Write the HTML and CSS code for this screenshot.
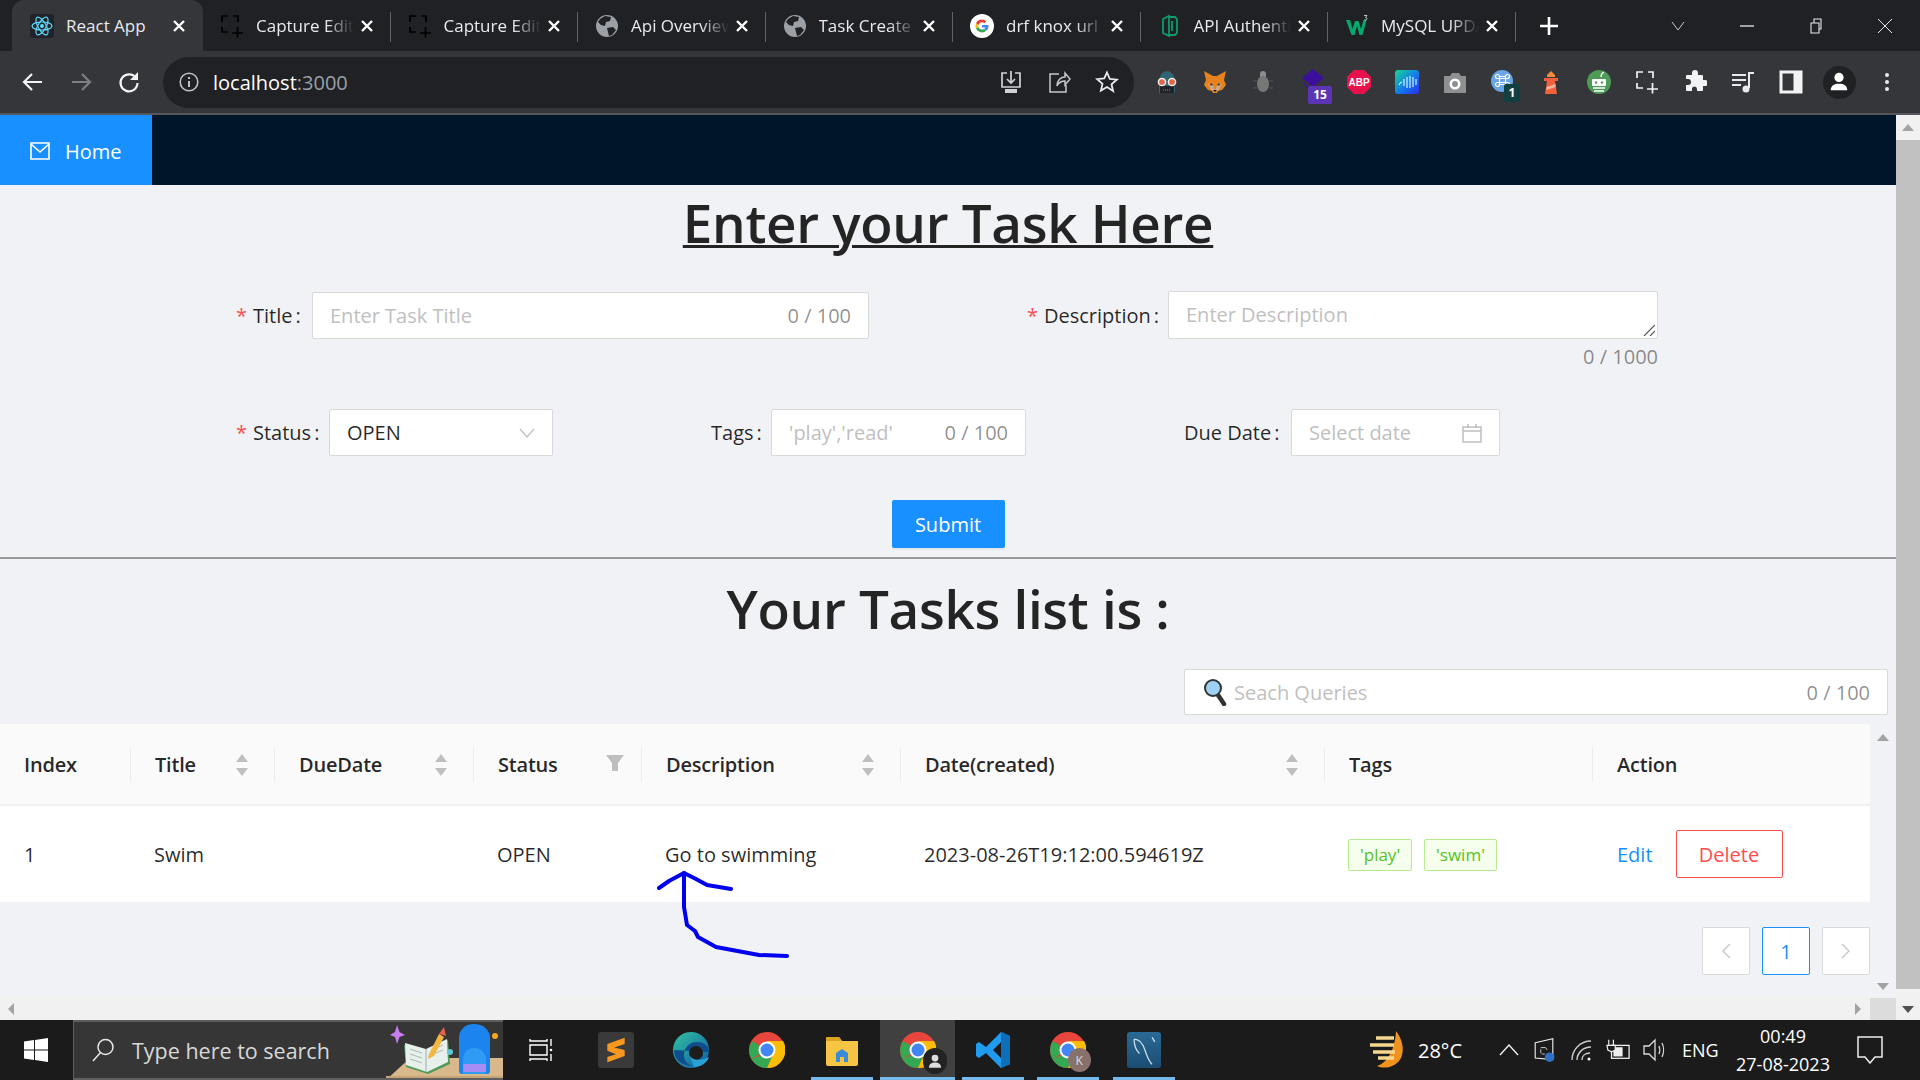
FILE: index.html
```html
<!DOCTYPE html>
<html lang="en">
<head>
<meta charset="utf-8">
<title>React App</title>
<link rel="stylesheet" href="styles.css">
</head>
<body>
<svg class="defs" width="0" height="0" aria-hidden="true">
  <defs>
    <symbol id="x" viewBox="0 0 14 14"><path d="M2 2l10 10M12 2L2 12" fill="none" stroke="currentColor" stroke-width="2.4"/></symbol>
    <symbol id="cap" viewBox="0 0 24 24"><path d="M2 8V2h6M13 2h5v6M2 13v5h6M12 19h11M17.500 13v10.500" fill="none" stroke="currentColor" stroke-width="1.700"/></symbol>
    <symbol id="globe" viewBox="0 0 24 24"><circle cx="12" cy="12" r="11" fill="#9aa0a6"/><path d="M5 5l5-3 6 1-1 4-4 1-1 4-4-1-3-3zM12 14l6-1 3 3-4 5-3 1-1-4z" fill="#202124"/></symbol>
    <symbol id="sort" viewBox="0 0 14 24"><path d="M7 1l6 8H1zM7 23l-6-8h12z" fill="#bfbfbf"/></symbol>
    <symbol id="chrome" viewBox="0 0 36 36"><circle cx="18" cy="18" r="18" fill="#e8453c"/><path d="M18 18L2.4 27A18 18 0 0 1 3 9z" fill="#34a853"/><path d="M2.4 27A18 18 0 0 0 18 36L26 18z" fill="#34a853"/><path d="M18 36A18 18 0 0 0 34 9H18l8 9z" fill="#fbbc05"/><circle cx="18" cy="18" r="8.5" fill="#fff"/><circle cx="18" cy="18" r="6.5" fill="#4285f4"/></symbol>
  </defs>
</svg>

<header class="tabstrip">
  <div class="tab active">
    <svg class="fav" viewBox="0 0 24 24"><rect width="24" height="24" rx="3" fill="#20232a"/><g fill="none" stroke="#61dafb" stroke-width="1.2"><ellipse cx="12" cy="12" rx="10" ry="4"/><ellipse cx="12" cy="12" rx="10" ry="4" transform="rotate(60 12 12)"/><ellipse cx="12" cy="12" rx="10" ry="4" transform="rotate(120 12 12)"/></g><circle cx="12" cy="12" r="2" fill="#61dafb"/></svg>
    <span class="tab-title">React App</span>
    <svg class="tab-x"><use href="#x"/></svg>
  </div>
  <div class="tab nosep"><svg class="fav fav-black"><use href="#cap"/></svg><span class="tab-title fade">Capture Editor</span><svg class="tab-x"><use href="#x"/></svg></div>
  <div class="tab"><svg class="fav fav-black"><use href="#cap"/></svg><span class="tab-title fade">Capture Editor</span><svg class="tab-x"><use href="#x"/></svg></div>
  <div class="tab"><svg class="fav"><use href="#globe"/></svg><span class="tab-title fade">Api Overview</span><svg class="tab-x"><use href="#x"/></svg></div>
  <div class="tab"><svg class="fav"><use href="#globe"/></svg><span class="tab-title fade">Task Create</span><svg class="tab-x"><use href="#x"/></svg></div>
  <div class="tab">
    <svg class="fav" viewBox="0 0 24 24"><circle cx="12" cy="12" r="12" fill="#fff"/><path d="M12 5.5a6.5 6.5 0 0 1 4.4 1.7l-2 2A3.800 3.800 0 0 0 8.400 11L6 9.200A6.500 6.500 0 0 1 12 5.500z" fill="#ea4335"/><path d="M6 9.200L8.400 11a3.800 3.800 0 0 0 0 2L6 14.800a6.500 6.500 0 0 1 0-5.600z" fill="#fbbc05"/><path d="M6 14.800L8.400 13a3.800 3.800 0 0 0 5.600 2l2.200 1.800A6.500 6.500 0 0 1 6 14.800z" fill="#34a853"/><path d="M18.400 11h-6.300v2.500h3.500a3 3 0 0 1-1.600 1.500l2.200 1.800a6.300 6.300 0 0 0 2.200-5.800z" fill="#4285f4"/></svg>
    <span class="tab-title fade">drf knox url</span><svg class="tab-x"><use href="#x"/></svg>
  </div>
  <div class="tab">
    <svg class="fav" viewBox="0 0 24 24"><path d="M5 5l6-3v20l-6-3zM11 3h6l2 2v14l-2 2h-6M14 7v10" fill="none" stroke="#0c9b6a" stroke-width="1.800"/></svg>
    <span class="tab-title fade">API Authentication</span><svg class="tab-x"><use href="#x"/></svg>
  </div>
  <div class="tab">
    <svg class="fav" viewBox="0 0 24 24"><path d="M1 6h4l2.500 9L10 7h3.500l2.500 8 2.500-9h3L17.500 21h-3L12 12l-2.500 9h-3z" fill="#04aa6d"/><path d="M19 1.500h3l-1.500 2c1 0 1.500.5 1.500 1.200 0 1-1 1.500-2.700 1.200" fill="none" stroke="#cfd3d6" stroke-width=".9"/></svg>
    <span class="tab-title fade">MySQL UPDATE</span><svg class="tab-x"><use href="#x"/></svg>
  </div>
  <svg class="newtab" viewBox="0 0 18 18"><path d="M9 0v18M0 9h18" stroke="#fff" stroke-width="2.600"/></svg>
  <div class="wincontrols">
    <svg class="wc" viewBox="0 0 16 16"><path d="M2 4l6 8 6-8" fill="none" stroke="#c8c9cb" stroke-width="1"/></svg>
    <svg class="wc" viewBox="0 0 16 16"><path d="M1 8h14" stroke="#e8eaed" stroke-width="1.300"/></svg>
    <svg class="wc" viewBox="0 0 16 16"><path d="M3 5h8v10H3zM6 5V1h7v10h-2" fill="none" stroke="#e8eaed" stroke-width="1.100"/></svg>
    <svg class="wc" viewBox="0 0 16 16"><path d="M1 1l14 14M15 1L1 15" stroke="#e8eaed" stroke-width="1"/></svg>
  </div>
</header>

<nav class="toolbar">
  <button class="navbtn"><svg viewBox="0 0 24 24"><path d="M21 12H4M11 4l-8 8 8 8" fill="none" stroke="#f1f3f4" stroke-width="2.200"/></svg></button>
  <button class="navbtn"><svg viewBox="0 0 24 24"><path d="M3 12h17M13 4l8 8-8 8" fill="none" stroke="#7d7f82" stroke-width="2.200"/></svg></button>
  <button class="navbtn"><svg viewBox="0 0 24 24"><path d="M19 8a8.500 8.500 0 1 0 1.500 5" fill="none" stroke="#f1f3f4" stroke-width="2.200"/><path d="M21 2v8h-8z" fill="#f1f3f4"/></svg></button>
  <div class="omnibox">
    <svg class="info" viewBox="0 0 20 20"><circle cx="10" cy="10" r="8.800" fill="none" stroke="#bdc1c6" stroke-width="1.600"/><path d="M10 9v6M10 5v2" stroke="#bdc1c6" stroke-width="2"/></svg>
    <span class="url">localhost<span class="port">:3000</span></span>
    <div class="omni-actions">
      <svg viewBox="0 0 24 24"><path d="M8 3H3v14h18V3h-5M12 1v11M8 9l4 4 4-4" fill="none" stroke="#d0d2d5" stroke-width="1.700"/><rect x="6" y="19" width="12" height="4" fill="#d0d2d5"/></svg>
      <svg viewBox="0 0 24 24"><path d="M12 4H3v18h16v-7M10 16c0-6 4-9 8-9V3l5 6-5 6v-4c-3 0-6 1-8 5z" fill="none" stroke="#c4c6c9" stroke-width="1.500"/></svg>
      <svg viewBox="0 0 24 24"><path d="M12 2.500l2.800 6.500 7 .6-5.300 4.600 1.600 6.900L12 17l-6.100 3.600 1.600-6.900L2.200 9.100l7-.6z" fill="none" stroke="#e8eaed" stroke-width="1.800"/></svg>
    </div>
  </div>
  <div class="extensions">
    <div class="ext"><svg viewBox="0 0 24 24"><path d="M4 11a8 10 0 0 1 16 0v12H4z" fill="#2f6473"/><rect x="5" y="16" width="14" height="7" fill="#20242a"/><path d="M8 20h8" stroke="#7a8c94" stroke-width="1.200" stroke-dasharray="1 1"/><circle cx="7" cy="12" r="3.600" fill="#e2674a" stroke="#f3ebe4" stroke-width="1.500"/><circle cx="17" cy="12" r="3.600" fill="#e2674a" stroke="#f3ebe4" stroke-width="1.500"/></svg></div>
    <div class="ext"><svg viewBox="0 0 24 24"><path d="M1 1l9 5h4l9-5-2 9 2 5-4 5-4 1-1 2h-4l-1-2-4-1-4-5 2-5z" fill="#e8821e"/><path d="M5 14l5 2 2 5 2-5 5-2-4 7H9z" fill="#c0ad9e"/><path d="M8 13l2 2-3 .5zM16 13l-2 2 3 .5z" fill="#233447"/><path d="M10 20h4l-2 2z" fill="#2f1d0f"/></svg></div>
    <div class="ext"><svg viewBox="0 0 24 24"><path d="M9 4a3 3 0 0 1 6 0v3H9z" fill="#8b8c8e"/><ellipse cx="12" cy="14" rx="6" ry="8" fill="#777"/><path d="M2 11h4M2 18h4M18 11h4M18 18h4" stroke="#55565a" stroke-width="1"/></svg></div>
    <div class="ext wizard"><svg viewBox="0 0 24 24"><path d="M12 2l11 9-11 9-11-9z" fill="#3c0e9c"/><path d="M1 14l7 6v3z" fill="#3c0e9c"/></svg><span class="badge badge-purple">15</span></div>
    <div class="ext"><svg viewBox="0 0 24 24"><path d="M7 0h10l7 7v10l-7 7H7l-7-7V7z" fill="#e8114b"/><text class="abp" x="12" y="15.500" text-anchor="middle">ABP</text></svg></div>
    <div class="ext">
      <svg viewBox="0 0 24 24"><defs><linearGradient id="lg" x1="0" y1="0" x2="1" y2="1"><stop offset="0" stop-color="#17d68f"/><stop offset=".55" stop-color="#1479f0"/><stop offset="1" stop-color="#2b2ee8"/></linearGradient></defs><rect width="24" height="24" rx="3" fill="url(#lg)"/><path d="M4 15c1-2 2-3 3-3M9 9v7M12 7v11M15 6v12M18 7v10M21 9v6" fill="none" stroke="#dff" stroke-width="1.100"/></svg>
    </div>
    <div class="ext"><svg viewBox="0 0 24 24"><path d="M1 6h6l2-3h7l2 3h5v17H1z" fill="#8f9092"/><circle cx="12" cy="14" r="5.500" fill="#fff"/><circle cx="12" cy="14" r="3" fill="#8f9092"/></svg></div>
    <div class="ext"><svg viewBox="0 0 24 24"><circle cx="11" cy="11" r="11" fill="#6aa5e8"/><path d="M8.500 6.500h6v8h-6zM8.500 6.500a2 2 0 1 0-2 2h10a2 2 0 1 0-2-2M8.500 14.500a2 2 0 1 1-2-2h10a2 2 0 1 1-2 2" fill="none" stroke="#fff" stroke-width="1.200"/></svg><span class="badge badge-teal">1</span></div>
    <div class="ext"><svg viewBox="0 0 24 24"><path d="M12 1l4 4v2h-8V5z" fill="#f28b3c"/><path d="M5 8h14v3h-3l2 13H6l2-13H5z" fill="#f2603c"/><path d="M7.500 17l9-3v3l-9 3z" fill="#f9b59b"/></svg></div>
    <div class="ext"><svg viewBox="0 0 24 24"><circle cx="12" cy="12" r="12" fill="#4e9a57"/><rect x="5" y="9" width="14" height="7" rx="1" fill="#fff"/><circle cx="9" cy="12.500" r="1.200" fill="#4e9a57"/><circle cx="15" cy="12.500" r="1.200" fill="#4e9a57"/><path d="M14 7c0-3 1-4 3-5M6 18h12M7 21h10" fill="none" stroke="#fff" stroke-width="1.300"/></svg></div>
    <div class="ext ext-white"><svg><use href="#cap"/></svg></div>
    <div class="ext"><svg viewBox="0 0 24 24"><path d="M9 3a3 3 0 0 1 6 0v2h4a1 1 0 0 1 1 1v4h2a3 3 0 0 1 0 6h-2v4a1 1 0 0 1-1 1h-5v-2a2.500 2.500 0 0 0-5 0v2H4a1 1 0 0 1-1-1v-5h2a3 3 0 0 0 0-6H3V6a1 1 0 0 1 1-1h5z" fill="#f1f3f4"/></svg></div>
    <div class="ext"><svg viewBox="0 0 24 24"><path d="M1 5h14M1 10h14M1 15h9" stroke="#e8eaed" stroke-width="2"/><path d="M18 18V3h5" fill="none" stroke="#e8eaed" stroke-width="2"/><circle cx="15" cy="19" r="3.500" fill="#e8eaed"/></svg></div>
    <div class="ext"><svg viewBox="0 0 24 24"><path d="M2 2h20v20H2zM16 2v20" fill="none" stroke="#f1f3f4" stroke-width="3"/><rect x="15" y="2" width="7" height="20" fill="#f1f3f4"/></svg></div>
    <div class="ext avatar"><svg viewBox="0 0 24 24"><circle cx="12" cy="7" r="5" fill="#fff"/><path d="M3 21c0-5 4-7 9-7s9 2 9 7z" fill="#fff"/></svg></div>
    <div class="ext"><svg viewBox="0 0 24 24"><circle cx="12" cy="5" r="2" fill="#e8eaed"/><circle cx="12" cy="12" r="2" fill="#e8eaed"/><circle cx="12" cy="19" r="2" fill="#e8eaed"/></svg></div>
  </div>
</nav>

<div class="viewport">
  <main class="page">
    <div class="topnav">
      <a class="home">
        <svg viewBox="0 0 20 18"><path d="M1 1h18v16H1zM1 2l9 8 9-8" fill="none" stroke="#fff" stroke-width="1.600"/></svg>
        <span>Home</span>
      </a>
    </div>

    <h1 class="heading underlined">Enter your Task Here</h1>

    <form class="task-form">
      <div class="form-row first">
        <div class="field f-title">
          <label class="lbl req">Title</label>
          <div class="input"><span class="ph">Enter Task Title</span><span class="count">0 / 100</span></div>
        </div>
        <div class="field f-desc">
          <label class="lbl req">Description</label>
          <div class="desc-wrap">
            <div class="input textarea"><span class="ph">Enter Description</span>
              <svg class="resize" viewBox="0 0 12 12"><path d="M1 12L12 1M7 12l5-5" stroke="#555" stroke-width="1.200"/></svg>
            </div>
            <div class="desc-count">0 / 1000</div>
          </div>
        </div>
      </div>
      <div class="form-row">
        <div class="field f-status">
          <label class="lbl req">Status</label>
          <div class="input"><span class="val">OPEN</span>
            <svg class="chev" viewBox="0 0 16 10"><path d="M1 1l7 8 7-8" fill="none" stroke="#bfbfbf" stroke-width="1.300"/></svg></div>
        </div>
        <div class="field f-tags">
          <label class="lbl">Tags</label>
          <div class="input"><span class="ph">'play','read'</span><span class="count">0 / 100</span></div>
        </div>
        <div class="field f-date">
          <label class="lbl">Due Date</label>
          <div class="input"><span class="ph">Select date</span>
            <svg class="cal" viewBox="0 0 20 20"><path d="M1 4h18v15H1zM1 8h18M6 1v4M14 1v4" fill="none" stroke="#bfbfbf" stroke-width="1.500"/></svg></div>
        </div>
      </div>
      <div class="submit-row"><button class="btn-primary" type="button">Submit</button></div>
    </form>

    <hr class="rule">

    <h1 class="heading second">Your Tasks list is :</h1>

    <div class="search-row">
      <div class="input search">
        <svg class="mag" viewBox="0 0 24 28"><path d="M15 17l6 9" stroke="#333" stroke-width="4.500" stroke-linecap="round"/><circle cx="10" cy="10" r="8" fill="#9fd1f5" stroke="#333" stroke-width="2"/></svg>
        <span class="ph">Seach Queries</span><span class="count">0 / 100</span>
      </div>
    </div>

    <div class="table-area">
      <div class="table">
        <div class="trow thead">
          <div class="th"><span class="th-in">Index</span></div>
          <div class="th"><span class="th-in sep">Title<svg class="sort"><use href="#sort"/></svg></span></div>
          <div class="th"><span class="th-in sep">DueDate<svg class="sort"><use href="#sort"/></svg></span></div>
          <div class="th"><span class="th-in sep">Status<svg class="filter" viewBox="0 0 18 16"><path d="M0 0h18l-6 8v8H6V8z" fill="#bfbfbf"/></svg></span></div>
          <div class="th"><span class="th-in sep">Description<svg class="sort"><use href="#sort"/></svg></span></div>
          <div class="th"><span class="th-in sep">Date(created)<svg class="sort"><use href="#sort"/></svg></span></div>
          <div class="th"><span class="th-in sep">Tags</span></div>
          <div class="th"><span class="th-in sep">Action</span></div>
        </div>
        <div class="trow tbody">
          <div class="td">1</div>
          <div class="td">Swim</div>
          <div class="td"></div>
          <div class="td">OPEN</div>
          <div class="td">Go to swimming</div>
          <div class="td">2023-08-26T19:12:00.594619Z</div>
          <div class="td tags"><span class="tag">'play'</span><span class="tag">'swim'</span></div>
          <div class="td actions"><a class="edit">Edit</a><button class="btn-danger" type="button">Delete</button></div>
        </div>
        <div class="pagination">
          <span class="pg"><svg viewBox="0 0 10 16"><path d="M9 1L2 8l7 7" fill="none" stroke="#c4c4c4" stroke-width="1.300"/></svg></span>
          <span class="pg current">1</span>
          <span class="pg"><svg viewBox="0 0 10 16"><path d="M1 1l7 7-7 7" fill="none" stroke="#c4c4c4" stroke-width="1.300"/></svg></span>
        </div>
      </div>
      <div class="inner-scroll"><i class="tri up"></i><i class="tri down"></i></div>
    </div>

    <svg class="scribble" viewBox="0 0 140 100" fill="none" stroke="#0000ee" stroke-width="4" stroke-linecap="round" stroke-linejoin="round">
      <path d="M4 17L14 10 29 2 41 8 52 14 76 18"/>
      <path d="M29 2V36L32 54 40 60 43 66 61 76 104 84 132 85"/>
    </svg>

    <div class="hscroll"><i class="tri left"></i><i class="tri right"></i><span class="corner"></span></div>
  </main>
  <aside class="vscroll"><i class="tri2 up"></i><span class="thumb"></span><i class="tri2 down"></i></aside>
</div>

<footer class="taskbar">
  <div class="start"><svg viewBox="0 0 24 24"><path d="M0 3.500l10-1.400v9.400H0zM11 2l13-2v11.500H11zM0 12.500h10v9.500L0 20.500zM11 12.500h13V24l-13-2z" fill="#fff"/></svg></div>
  <div class="tb-search">
    <svg class="tb-mag" viewBox="0 0 24 24"><circle cx="14.500" cy="9" r="7.500" fill="none" stroke="#e8e8e8" stroke-width="1.500"/><path d="M9.500 14.500L2 23" stroke="#e8e8e8" stroke-width="1.500"/></svg>
    <span class="tb-text">Type here to search</span>
    <svg class="tb-art" viewBox="0 0 118 60">
      <path d="M1 60L25 38H118V60z" fill="#d9b98c"/>
      <path d="M1 56h117v4H1z" fill="#c5a477"/>
      <path d="M19 25l22 6 22-11 2 24-22 10-22-7z" fill="#4e9a57"/>
      <path d="M20 23l21 6 21-10 1 23-21 10-21-7z" fill="#e8f0ec"/>
      <path d="M41 29v23" stroke="#9ab" stroke-width="1"/>
      <path d="M25 29l12 4M25 34l12 4M25 39l12 4M46 30l12-5M46 35l12-5" stroke="#aab8b4" stroke-width="1"/>
      <path d="M44 34l10-20 5 3-10 19-6 3z" fill="#f4b63f"/>
      <path d="M54 14l5-7 2 9z" fill="#e6604c"/>
      <path d="M12 5l2.500 7 5.500 3-5.500 2-2.500 7-2-7-5-2 5-3z" fill="#c77cf0"/>
      <path d="M74 18c0-8 6-14 15-14s16 6 16 14v33a3 3 0 0 1-3 3H77a3 3 0 0 1-3-3z" fill="#1b84ee"/>
      <path d="M78 40c0-8 5-12 11-12s12 4 12 12v14H78z" fill="#2f9bf5"/>
      <rect x="78" y="44" width="23" height="8" fill="#a68df5"/>
      <circle cx="110" cy="16" r="3" fill="#f5a623"/>
      <circle cx="65" cy="32" r="3" fill="#5ec6d8"/>
    </svg>
  </div>
  <div class="tb-apps">
    <div class="tb-app"><svg class="small" viewBox="0 0 24 24"><path d="M1 1v2h17V1M1 7h17v10H1zM1 23v-2h17v2M22 1v7M22 16v7" fill="none" stroke="#fff" stroke-width="1.400"/><circle cx="22" cy="12" r="1.300" fill="#fff"/></svg></div>
    <div class="tb-app"><span class="sublime"><svg viewBox="0 0 24 30"><path d="M22 1L2 8v8l20 6v-7L10 12l12-4zM2 16l20 6-20 7v-6l10-3z" fill="#f89820"/></svg></span></div>
    <div class="tb-app"><svg viewBox="0 0 36 36"><defs><linearGradient id="edge" x1="0" y1="0" x2="1" y2="1"><stop offset="0" stop-color="#34c3a0"/><stop offset="1" stop-color="#0c5aa6"/></linearGradient></defs><circle cx="18" cy="18" r="18" fill="url(#edge)"/><path d="M36 20c0-7-6-10-12-10-8 0-13 6-13 13 0 5 3 9 8 11-10 0-18-6-18-16" fill="#0f4d8c"/><circle cx="23" cy="21" r="7" fill="#1c1c1c"/><path d="M16 22c2 6 10 8 20 3-2 6-8 10-15 10z" fill="#2aa0d8"/></svg></div>
    <div class="tb-app"><svg><use href="#chrome"/></svg></div>
    <div class="tb-app open"><svg viewBox="0 0 36 36"><path d="M2 5h13l3 4h16v23a2 2 0 0 1-2 2H4a2 2 0 0 1-2-2z" fill="#f6c544"/><path d="M2 5h13l3 4h-16z" fill="#d9a422"/><path d="M12 30V21l6-4 6 4v9h-4v-5h-4v5z" fill="#3a8bd8"/></svg></div>
    <div class="tb-app running"><svg><use href="#chrome"/></svg><span class="tb-user"><svg viewBox="0 0 24 24"><circle cx="12" cy="8" r="4.500" fill="#ddd"/><path d="M4 21c0-5 3-7 8-7s8 2 8 7z" fill="#ddd"/></svg></span></div>
    <div class="tb-app open"><svg viewBox="0 0 36 36"><path d="M26 0l9 4v28l-9 4L11 21l-7 5-3-2V12l3-2 7 5zM26 10l-8 8 8 8z" fill="#1f9cf0"/><path d="M26 0l9 4v28l-9 4z" fill="#0e6fb8"/></svg></div>
    <div class="tb-app open"><svg><use href="#chrome"/></svg><span class="tb-k">K</span></div>
    <div class="tb-app open"><span class="mysql"><svg viewBox="0 0 34 40"><path d="M6 8c6 0 10 6 12 12s4 12 8 16M6 8c0 6 2 12 6 16M26 6l3 5" fill="none" stroke="#cfe0ea" stroke-width="1.400"/></svg></span></div>
  </div>
  <div class="tray">
    <svg class="weather" viewBox="0 0 36 40"><path d="M26 1c6 8 9 18 5 27-4 8-15 12-24 8C17 33 25 20 26 1z" fill="#f0921e"/><path d="M6 8h18M0 15h24M3 22h22M8 28h16" stroke="#f5d78e" stroke-width="3.500"/></svg>
    <span class="temp">28°C</span>
    <svg class="t-chev" viewBox="0 0 20 12"><path d="M1 11l9-10 9 10" fill="none" stroke="#eee" stroke-width="1.400"/></svg>
    <span class="t-ic first"><svg viewBox="0 0 26 30"><path d="M2 6l22-5v26L2 25z" fill="none" stroke="#eee" stroke-width="1.400"/><path d="M9 12h6l2 3M9 19v-5M14 20h-4" stroke="#eee" fill="none" stroke-width="1"/><circle cx="20" cy="24" r="6" fill="#2f6fc4"/></svg></span>
    <span class="t-ic gap"><svg viewBox="0 0 24 24"><path d="M2 22C2 12 10 3 21 3M7 22C7 15 13 9 21 9M12 22c0-4 3-7 8-7" fill="none" stroke="#ccc" stroke-width="1.400"/><circle cx="19" cy="21" r="1.500" fill="#fff"/></svg></span>
    <span class="t-ic"><svg viewBox="0 0 26 24"><rect x="6" y="7" width="19" height="14" fill="none" stroke="#eee" stroke-width="1.400"/><rect x="8" y="9" width="10" height="10" fill="#eee"/><path d="M3 1v6M8 1v6M1 7h9v5l-4 2-4-2z" fill="#1c1c1c" stroke="#eee" stroke-width="1.300"/></svg></span>
    <span class="t-ic"><svg viewBox="0 0 24 24"><path d="M2 8h5l6-6v20l-6-6H2zM17 8c1 2 1 6 0 8M20 5c2 4 2 10 0 14" fill="none" stroke="#ddd" stroke-width="1.300"/></svg></span>
    <span class="lang">ENG</span>
    <div class="clock"><span>00:49</span><span>27-08-2023</span></div>
    <svg class="notif" viewBox="0 0 26 28"><path d="M1 1h24v20h-7l-5 6-5-6H1z" fill="none" stroke="#eee" stroke-width="1.500"/></svg>
  </div>
</footer>
</body>
</html>
```
FILE: styles.css
```css
* { box-sizing: border-box; }
html, body { margin: 0; height: 100%; overflow: hidden; }
body {
  width: 1920px;
  height: 1080px;
  display: flex;
  flex-direction: column;
  font-family: "Open Sans", "Noto Sans", sans-serif;
  font-size: 20px;
  color: rgba(0, 0, 0, .85);
  background: #f0f2f5;
}
.defs { position: absolute; }

/* tab strip */
.tabstrip { height: 51px; background: #202124; display: flex; align-items: stretch; padding-left: 12px; flex: none; }
.tab { width: 187.5px; display: flex; align-items: center; padding-left: 17px; position: relative; color: #e8eaed; }
.tab::after { content: ""; position: absolute; right: 0; top: 12px; bottom: 9px; width: 1px; background: #5f6368; }
.tab.active::after { display: none; }
.tab.active { width: 191px; background: #35363a; border-radius: 12px 12px 0 0; padding-left: 18px; }
.fav { width: 24px; height: 24px; flex: none; }
.fav-black { color: #000; }
.tab-title { margin-left: 12px; flex: 1; min-width: 0; white-space: nowrap; overflow: hidden; font-size: 17px; }
.tab-title.fade { -webkit-mask-image: linear-gradient(to right, #000 70%, transparent 98%); mask-image: linear-gradient(to right, #000 70%, transparent 98%); }
.tab-x { width: 14px; height: 14px; flex: none; color: #fff; margin: 0 17px 0 4px; }
.newtab { width: 18px; height: 18px; align-self: center; margin-left: 24px; flex: none; }
.wincontrols { margin-left: auto; display: flex; align-items: center; }
.wc { width: 16px; height: 16px; margin-left: 53px; flex: none; }
.wincontrols .wc:last-child { margin-right: 27px; }

/* toolbar */
.toolbar { height: 64px; background: #35363a; border-bottom: 2px solid #55565a; display: flex; align-items: center; padding-left: 9px; flex: none; }
.navbtn { width: 48px; height: 48px; border: 0; background: none; padding: 0; display: flex; align-items: center; justify-content: center; }
.navbtn svg { width: 24px; height: 24px; }
.omnibox { width: 971px; height: 51px; margin-left: 10px; border-radius: 26px; background: #202124; display: flex; align-items: center; padding: 0 15px 0 16px; }
.info { width: 20px; height: 20px; }
.url { margin-left: 14px; font-size: 20px; color: #fff; }
.port { color: #9aa0a6; }
.omni-actions { margin-left: auto; display: flex; gap: 24px; }
.omni-actions svg { width: 24px; height: 24px; }
.extensions { display: flex; margin-left: 9px; }
.ext { width: 48px; height: 48px; display: flex; align-items: center; justify-content: center; position: relative; }
.ext > svg { width: 24px; height: 24px; }
.ext-white { color: #f1f3f4; }
.avatar { background: #202124; border-radius: 50%; width: 33px; height: 33px; margin: 7.500px; }
.avatar > svg { width: 22px; height: 22px; }
.wizard > svg { margin: -6px 0 0 3px; }
.badge { position: absolute; font-size: 12px; font-weight: 700; color: #fff; border-radius: 2px; line-height: 18px; text-align: center; height: 18px; }
.badge-purple { left: 21px; top: 28px; width: 24px; background: #5b35b5; }
.badge-teal { left: 25px; top: 26px; width: 16px; background: #123f40; }
.abp { font-size: 10px; font-weight: 700; fill: #fff; font-family: "Liberation Sans", sans-serif; }

/* page */
.viewport { flex: none; height: 905px; display: flex; }
.page { flex: 1; min-width: 0; display: flex; flex-direction: column; position: relative; background: #f0f2f5; overflow: hidden; }
.topnav { height: 70px; background: #001529; flex: none; display: flex; }
.home { width: 152px; background: #1890ff; color: #fff; display: flex; align-items: center; padding: 2px 0 0 30px; gap: 15px; }
.home svg { width: 20px; height: 18px; }
.heading { margin: 0; text-align: center; font-weight: 600; font-size: 53px; line-height: 76px; letter-spacing: -0.006em; flex: none; }
.underlined { text-decoration: underline; text-decoration-thickness: 3px; height: 76px; }
.task-form { flex: none; }
.form-row { display: flex; gap: 158px; padding-left: 236px; }
.form-row.first { margin-top: 31px; height: 117px; }
.field { display: flex; align-items: flex-start; flex: none; }
.f-title { width: 633px; }
.f-title .input { width: 557px; }
.f-desc { width: 631px; }
.f-status { width: 317px; }
.f-status .input { width: 224px; }
.f-tags { width: 315px; }
.f-tags .input { width: 255px; }
.f-date { width: 316px; }
.f-date .input { width: 209px; }
.lbl { flex: 1; height: 47px; display: flex; align-items: center; white-space: nowrap; }
.lbl::after { content: ":"; margin-left: 3px; }
.lbl.req::before { content: "*"; color: #ff4d4f; margin-right: 6px; }
.input { height: 47px; background: #fff; border: 1px solid #d9d9d9; border-radius: 2px; display: flex; align-items: center; padding: 0 17px; flex: none; }
.ph { color: #bfbfbf; white-space: nowrap; }
.count { margin-left: auto; color: rgba(0, 0, 0, .45); white-space: nowrap; }
.val { color: rgba(0, 0, 0, .85); }
.chev { width: 16px; height: 10px; margin-left: auto; }
.cal { width: 20px; height: 20px; margin-left: auto; }
.desc-wrap { width: 490px; margin-top: -1px; flex: none; }
.textarea { height: 48px; width: 100%; align-items: flex-start; padding-top: 9px; position: relative; }
.resize { position: absolute; right: 2px; bottom: 2px; width: 12px; height: 12px; }
.desc-count { text-align: right; color: rgba(0, 0, 0, .45); line-height: 36px; }
.submit-row { display: flex; justify-content: center; margin-top: 44px; }
.btn-primary { width: 113px; height: 48px; border: 0; border-radius: 2px; background: #1890ff; color: #fff; font: inherit; box-shadow: 0 2px 0 rgba(0, 0, 0, .045); }
.rule { width: 100%; height: 2px; margin: 9px 0 0; border: 0; background: #9a9a9a; flex: none; }
.second { margin-top: 12px; height: 76px; }
.search-row { display: flex; justify-content: flex-end; padding-right: 8px; margin-top: 22px; flex: none; }
.search { width: 704px; height: 46px; padding-left: 18px; }
.mag { width: 24px; height: 28px; margin-right: 7px; flex: none; }
.table-area { display: flex; flex: none; margin-top: 9px; }
.table { width: 1870px; flex: none; }
.inner-scroll { flex: 1; display: flex; flex-direction: column; justify-content: space-between; align-items: center; padding: 10px 0 8px; height: 274px; }
.trow { display: grid; grid-template-columns: 130px 144px 199px 168px 259px 424px 268px 278px; }
.thead { height: 82px; background: #fafafa; border-bottom: 2px solid #f0f0f0; }
.th { display: flex; align-items: center; font-weight: 600; letter-spacing: -0.01em; padding-top: 1px; }
.th-in { flex: 1; height: 35px; display: flex; align-items: center; justify-content: space-between; padding: 0 25px 0 24px; }
.th-in.sep { border-left: 1px solid #ececec; }
.sort { width: 14px; height: 24px; flex: none; }
.filter { width: 18px; height: 16px; margin: -4px -8px 0 0; flex: none; }
.tbody { height: 96px; background: #fff; }
.td { display: flex; align-items: center; padding-left: 24px; white-space: nowrap; }
.tags { gap: 12px; padding-left: 24px; }
.tag { height: 32px; padding: 0 11px; margin-top: 2px; border: 1px solid #b7eb8f; border-radius: 2px; background: #f6ffed; color: #52c41a; font-size: 17px; line-height: 30px; }
.actions { gap: 23px; padding-left: 25px; }
.edit { color: #1890ff; }
.btn-danger { width: 107px; height: 48px; background: #fff; border: 1px solid #ff4d4f; border-radius: 2px; color: #ff4d4f; font: inherit; }
.pagination { display: flex; justify-content: flex-end; gap: 12px; margin-top: 25px; }
.pg { width: 48px; height: 48px; background: #fff; border: 1px solid #d9d9d9; border-radius: 2px; display: flex; align-items: center; justify-content: center; }
.pg svg { width: 10px; height: 16px; }
.pg.current { border-color: #1890ff; color: #1890ff; }
.tri { display: block; width: 0; height: 0; border: 5px solid transparent; }
.tri.up { border-top: 0; border-bottom: 7px solid #a3a3a3; width: 0; border-left-width: 6px; border-right-width: 6px; }
.tri.down { border-bottom: 0; border-top: 7px solid #a3a3a3; border-left-width: 6px; border-right-width: 6px; }
.tri.left { border-left: 0; border-right: 6px solid #a3a3a3; border-top-width: 6px; border-bottom-width: 6px; margin-left: 8px; }
.tri.right { border-right: 0; border-left: 6px solid #a3a3a3; border-top-width: 6px; border-bottom-width: 6px; margin-left: auto; margin-right: 9px; }
.scribble { position: absolute; left: 655px; top: 756px; width: 140px; height: 100px; }
.hscroll { margin-top: auto; height: 22px; background: #f1f1f1; flex: none; display: flex; align-items: center; }
.corner { width: 26px; height: 22px; background: #dcdcdc; flex: none; }
.vscroll { width: 24px; flex: none; background: #f1f1f1; display: flex; flex-direction: column; align-items: center; }
.thumb { width: 100%; height: 849px; background: #c1c1c1; margin-top: 9px; flex: none; }
.tri2 { display: block; width: 0; height: 0; flex: none; border-left: 6px solid transparent; border-right: 6px solid transparent; }
.tri2.up { margin-top: 9px; border-bottom: 7px solid #a3a3a3; }
.tri2.down { margin-top: 17px; border-top: 7px solid #505050; }

/* taskbar */
.taskbar { flex: none; height: 60px; background: #1b1b1b; display: flex; color: #fff; }
.start { width: 73px; display: flex; align-items: center; justify-content: center; padding-right: 1px; }
.start svg { width: 24px; height: 24px; }
.tb-search { width: 430px; background: #363636; border: 1px solid #5f5f5f; border-width: 2px 0 2px 1px; display: flex; align-items: center; padding-left: 17px; position: relative; overflow: hidden; }
.tb-mag { width: 24px; height: 24px; flex: none; }
.tb-text { margin-left: 17px; font-size: 21.500px; color: #d8d8d8; white-space: nowrap; padding-top: 1px; }
.tb-art { position: absolute; right: 0; top: -2px; width: 118px; height: 60px; }
.tb-apps { display: flex; }
.tb-app { width: 75.400px; display: flex; align-items: center; justify-content: center; position: relative; }
.tb-app > svg { width: 36px; height: 36px; }
.tb-app > svg.small { width: 24px; height: 24px; }
.tb-app.open { background: linear-gradient(#76b9ed, #76b9ed) center bottom / 62px 3px no-repeat; }
.tb-app.running { background: linear-gradient(#76b9ed, #76b9ed) center bottom / 100% 3px no-repeat, #404040; }
.sublime { width: 36px; height: 36px; border-radius: 3px; background: #3a3a3a; display: flex; align-items: center; justify-content: center; }
.sublime svg { width: 22px; height: 26px; }
.mysql { width: 34px; height: 36px; border-radius: 3px; background: linear-gradient(#2a6a96, #1c4d72); display: flex; }
.mysql svg { width: 34px; height: 36px; }
.tb-user { position: absolute; left: 43px; top: 28px; width: 24px; height: 26px; border-radius: 12px; background: #222; display: flex; align-items: center; justify-content: center; }
.tb-user svg { width: 18px; height: 18px; }
.tb-k { position: absolute; left: 37px; top: 28px; width: 23px; height: 24px; border-radius: 50%; background: #87716a; color: #ddd; font-size: 12px; display: flex; align-items: center; justify-content: center; }
.tray { margin-left: auto; display: flex; align-items: center; }
.weather { width: 36px; height: 40px; }
.temp { margin-left: 12px; font-size: 20px; width: 50px; }
.t-chev { width: 20px; height: 12px; margin-left: 31px; }
.t-ic { width: 36px; display: flex; justify-content: center; }
.t-ic svg { width: 24px; height: 24px; }
.t-ic.first { margin-left: 7px; }
.t-ic.gap { margin-left: 2px; }
.lang { margin-left: 10px; font-size: 18px; width: 50px; }
.clock { width: 100px; display: flex; flex-direction: column; align-items: center; font-size: 18px; line-height: 28px; margin-left: 1px; }
.notif { width: 26px; height: 28px; margin: 0 37px 0 24px; }
```
